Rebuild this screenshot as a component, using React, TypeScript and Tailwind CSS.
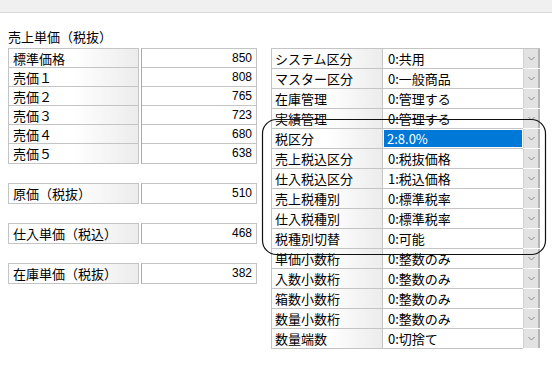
import React from 'react';

const leftGroups: [string, string][][] = [
  [
    ['標準価格', '850'],
    ['売価１', '808'],
    ['売価２', '765'],
    ['売価３', '723'],
    ['売価４', '680'],
    ['売価５', '638'],
  ],
  [['原価（税抜）', '510']],
  [['仕入単価（税込）', '468']],
  [['在庫単価（税抜）', '382']],
];

const settings: [string, string][] = [
  ['システム区分', '0:共用'],
  ['マスター区分', '0:一般商品'],
  ['在庫管理', '0:管理する'],
  ['実績管理', '0:管理する'],
  ['税区分', '2:8.0%'],
  ['売上税込区分', '0:税抜価格'],
  ['仕入税込区分', '1:税込価格'],
  ['売上税種別', '0:標準税率'],
  ['仕入税種別', '0:標準税率'],
  ['税種別切替', '0:可能'],
  ['単価小数桁', '0:整数のみ'],
  ['入数小数桁', '0:整数のみ'],
  ['箱数小数桁', '0:整数のみ'],
  ['数量小数桁', '0:整数のみ'],
  ['数量端数', '0:切捨て'],
];

// header cells fade from white to a light grey, like the old WinForms grid
const labelBg = 'bg-linear-to-r from-white via-white via-50% to-[#ececec]';

function PriceTable({ rows }: { rows: [string, string][] }) {
  return (
    <div className="flex">
      <div className="w-[131px] border border-[#c4c4c4] divide-y divide-[#c4c4c4]">
        {rows.map(([label]) => (
          <div key={label} className={`h-[19px] pl-[4px] text-[13px] leading-[19px] ${labelBg}`}>
            {label}
          </div>
        ))}
      </div>
      <div className="ml-[2px] flex-1 border border-[#c4c4c4] border-l-[#a9a9a9] divide-y divide-[#c4c4c4]">
        {rows.map(([label, value]) => (
          <div
            key={label}
            className="h-[19px] pr-[4px] text-right font-['Liberation_Sans',sans-serif] text-[12px] leading-[19px]"
          >
            {value}
          </div>
        ))}
      </div>
    </div>
  );
}

function Chevron() {
  return (
    <svg width="7" height="5" viewBox="0 0 7 5" className="block">
      <polyline points="0.5,1 3.5,4 6.5,1" fill="none" stroke="#8a8a8a" strokeWidth="1" />
    </svg>
  );
}

function SettingRow({ label, value, selected }: { label: string; value: string; selected?: boolean }) {
  return (
    <div className="flex h-[20px]">
      <div className="flex border-b border-[#c4c4c4]">
        <div className={`w-[112px] border-x border-[#c4c4c4] pl-[3px] text-[13px] leading-[19px] ${labelBg}`}>
          {label}
        </div>
        <div className="w-[140px] bg-white">
          {selected ? (
            <div className="m-[1px] h-[17px] bg-[#0078d7] pl-[3px] text-[13px] leading-[17px] text-white">
              {value}
            </div>
          ) : (
            <div className="pl-[5px] text-[13px] leading-[19px]">{value}</div>
          )}
        </div>
      </div>
      <div className="flex h-[19px] w-[17px] items-center justify-center border-l border-r-2 border-l-[#d2d2d2] border-r-[#b4b4b4] bg-[#e2e2e2]">
        <Chevron />
      </div>
    </div>
  );
}

export default function App() {
  return (
    <div className="relative h-[370px] w-[552px] overflow-hidden bg-white font-['Noto_Sans_CJK_JP','Noto_Sans',sans-serif] text-black">
      <div className="h-[13px] border-b border-[#d9d9d9] bg-[#f0f0f0]" />

      <div className="flex gap-[14px] pl-[8px]">
        <div className="w-[249px]">
          <div className="h-[35px] pt-[15px] text-[13px] leading-[17px]">売上単価（税抜）</div>
          <div className="flex flex-col gap-[19px]">
            {leftGroups.map((rows) => (
              <PriceTable key={rows[0][0]} rows={rows} />
            ))}
          </div>
        </div>

        <div className="mt-[35px] border-t border-[#c4c4c4]">
          {settings.map(([label, value]) => (
            <SettingRow key={label} label={label} value={value} selected={label === '税区分'} />
          ))}
        </div>
      </div>

      {/* hand-drawn callout around the tax settings */}
      <svg className="pointer-events-none absolute left-0 top-0" width="552" height="370">
        <rect x="262.5" y="119.5" width="283" height="135" rx="14" fill="none" stroke="#111" strokeWidth="1.2" />
      </svg>
    </div>
  );
}
